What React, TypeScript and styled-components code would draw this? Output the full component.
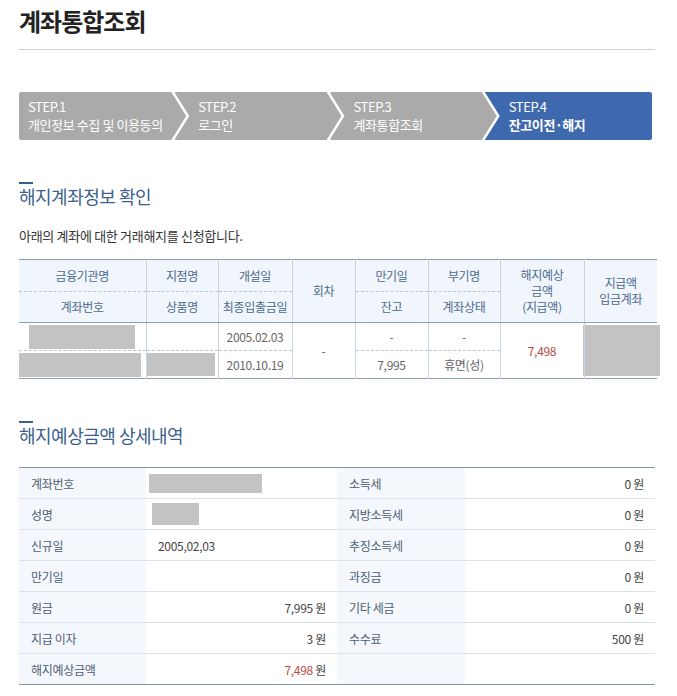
import React from 'react';
import styled, { createGlobalStyle } from 'styled-components';

const GlobalStyle = createGlobalStyle`
  html, body {
    margin: 0;
    padding: 0;
    background: #fff;
  }
  body {
    font-family: "Noto Sans CJK KR", "Noto Sans", sans-serif;
    color: #333;
  }
  * {
    box-sizing: border-box;
  }
`;

const Page = styled.div`
  width: 677px;
  padding: 0 20px 0 19px;
`;

const PageTitle = styled.h1`
  margin: 4px 0 0;
  padding-bottom: 11px;
  font-size: 24px;
  line-height: 34px;
  font-weight: 700;
  color: #222;
  letter-spacing: -1px;
  border-bottom: 1px solid #cfcfcf;
  width: 636px;
`;

const Steps = styled.ol`
  display: flex;
  list-style: none;
  margin: 42px 0 0;
  padding: 0;
  width: 633px;
  height: 48px;
`;

const Step = styled.li<{ $first?: boolean; $last?: boolean; $active?: boolean }>`
  flex: 0 0 calc((100% + 36px) / 4);
  display: flex;
  flex-direction: column;
  justify-content: center;
  margin-left: ${({ $first }) => ($first ? '0' : '-12px')};
  padding-left: ${({ $first }) => ($first ? '9px' : '24px')};
  background: ${({ $active }) => ($active ? '#3f69ae' : '#aaaaaa')};
  color: #fff;
  font-size: 13px;
  line-height: 18px;
  letter-spacing: -0.4px;
  white-space: nowrap;
  clip-path: ${({ $first, $last }) =>
    $last
      ? 'polygon(0 0, 100% 0, 100% 100%, 0 100%, 15px 50%)'
      : $first
        ? 'polygon(0 0, calc(100% - 15px) 0, 100% 50%, calc(100% - 15px) 100%, 0 100%)'
        : 'polygon(0 0, calc(100% - 15px) 0, 100% 50%, calc(100% - 15px) 100%, 0 100%, 15px 50%)'};
  border-radius: ${({ $last }) => ($last ? '0 2px 2px 0' : '2px 0 0 2px')};

  strong {
    font-weight: ${({ $active }) => ($active ? 700 : 400)};
  }
`;

const SectionTitle = styled.h2<{ $top: number }>`
  margin: ${({ $top }) => $top}px 0 0;
  padding-top: 3px;
  font-size: 18px;
  line-height: 22px;
  font-weight: 400;
  color: #3b5f8e;
  letter-spacing: -0.5px;
  position: relative;

  &::before {
    content: '';
    position: absolute;
    left: 0;
    top: 0;
    width: 14px;
    height: 2px;
    background: #3b5f8e;
  }
`;

const Desc = styled.p`
  margin: 19px 0 0;
  font-size: 13px;
  line-height: 20px;
  color: #333;
  letter-spacing: -0.3px;
`;

const AccountTable = styled.table`
  margin-top: 13px;
  width: 638px;
  border-collapse: collapse;
  table-layout: fixed;
  border-top: 1px solid #8ba0b6;
  border-bottom: 1px solid #8ba0b6;
  font-size: 12px;
  letter-spacing: -0.3px;
`;

const Th = styled.th<{ $dashed?: boolean; $h: number }>`
  height: ${({ $h }) => $h}px;
  padding: 0;
  background: #f1f6fc;
  color: #4c6a8e;
  font-weight: 400;
  line-height: 16px;
  text-align: center;
  border-left: 1px solid #c8d5e3;
  border-bottom: ${({ $dashed }) => ($dashed ? '1px dashed #b9c6d4' : '1px solid #8ba0b6')};

  &:first-child {
    border-left: none;
  }
`;

const Td = styled.td<{ $dashed?: boolean; $red?: boolean; $first?: boolean }>`
  height: 28px;
  padding: 0;
  text-align: center;
  color: ${({ $red }) => ($red ? '#b94a43' : '#666')};
  border-left: ${({ $first }) => ($first ? 'none' : '1px solid #c8d5e3')};
  border-bottom: ${({ $dashed }) => ($dashed ? '1px dashed #b9c6d4' : 'none')};
  vertical-align: middle;
`;

const Redact = styled.div<{ $w: number; $h: number; $ml?: number }>`
  width: ${({ $w }) => $w}px;
  height: ${({ $h }) => $h}px;
  margin-left: ${({ $ml }) => $ml ?? 0}px;
  background: #c3c3c3;
`;

const DetailGrid = styled.div`
  margin-top: 21px;
  width: 636px;
  display: grid;
  grid-template-columns: 127px 191px 128px 190px;
  border-top: 1px solid #8297ad;
  border-bottom: 1px solid #8297ad;
  font-size: 12px;
  letter-spacing: -0.3px;
`;

const Label = styled.div`
  height: 31px;
  display: flex;
  align-items: center;
  padding-left: 12px;
  background: #f4f8fc;
  color: #4e5e73;
  border-bottom: 1px solid #dbe2ea;
  &:nth-last-child(-n + 4) {
    border-bottom: none;
    height: 30px;
  }
`;

const Value = styled.div<{ $right?: boolean }>`
  height: 31px;
  display: flex;
  align-items: center;
  justify-content: ${({ $right }) => ($right ? 'flex-end' : 'flex-start')};
  padding: ${({ $right }) => ($right ? '0 11px 0 0' : '0 0 0 12px')};
  color: #444;
  border-bottom: 1px solid #dbe2ea;
  &:nth-last-child(-n + 4) {
    border-bottom: none;
    height: 30px;
  }
  em {
    font-style: normal;
    color: #b94a43;
  }
`;

const steps = [
  { no: 'STEP.1', name: '개인정보 수집 및 이용동의' },
  { no: 'STEP.2', name: '로그인' },
  { no: 'STEP.3', name: '계좌통합조회' },
  { no: 'STEP.4', name: '잔고이전·해지' },
];

const details: [string, React.ReactNode, boolean, string, string][] = [
  ['계좌번호', <Redact $w={113} $h={19} $ml={-9} />, false, '소득세', '0 원'],
  ['성명', <Redact $w={47} $h={22} $ml={-6} />, false, '지방소득세', '0 원'],
  ['신규일', '2005,02,03', false, '추징소득세', '0 원'],
  ['만기일', '', false, '과징금', '0 원'],
  ['원금', '7,995 원', true, '기타 세금', '0 원'],
  ['지급 이자', '3 원', true, '수수료', '500 원'],
  ['해지예상금액', <><em>7,498</em>&nbsp;원</>, true, '', ''],
];

export default function App() {
  return (
    <Page>
      <GlobalStyle />
      <PageTitle>계좌통합조회</PageTitle>

      <Steps>
        {steps.map((s, i) => (
          <Step key={s.no} $first={i === 0} $last={i === 3} $active={i === 3}>
            <span>{s.no}</span>
            <strong>{s.name}</strong>
          </Step>
        ))}
      </Steps>

      <SectionTitle $top={42}>해지계좌정보 확인</SectionTitle>
      <Desc>아래의 계좌에 대한 거래해지를 신청합니다.</Desc>

      <AccountTable>
        <colgroup>
          <col style={{ width: 127 }} />
          <col style={{ width: 72 }} />
          <col style={{ width: 74 }} />
          <col style={{ width: 63 }} />
          <col style={{ width: 73 }} />
          <col style={{ width: 72 }} />
          <col style={{ width: 84 }} />
          <col style={{ width: 73 }} />
        </colgroup>
        <thead>
          <tr>
            <Th $h={32} $dashed>금융기관명</Th>
            <Th $h={32} $dashed>지점명</Th>
            <Th $h={32} $dashed>개설일</Th>
            <Th $h={63} rowSpan={2}>회차</Th>
            <Th $h={32} $dashed>만기일</Th>
            <Th $h={32} $dashed>부기명</Th>
            <Th $h={63} rowSpan={2}>해지예상<br />금액<br />(지급액)</Th>
            <Th $h={63} rowSpan={2}>지급액<br />입금계좌</Th>
          </tr>
          <tr>
            <Th $h={31}>계좌번호</Th>
            <Th $h={31}>상품명</Th>
            <Th $h={31}>최종입출금일</Th>
            <Th $h={31}>잔고</Th>
            <Th $h={31}>계좌상태</Th>
          </tr>
        </thead>
        <tbody>
          <tr>
            <Td $first $dashed>
              <Redact $w={106} $h={24} $ml={10} />
            </Td>
            <Td $dashed />
            <Td $dashed>2005.02.03</Td>
            <Td rowSpan={2}>-</Td>
            <Td $dashed>-</Td>
            <Td $dashed>-</Td>
            <Td rowSpan={2} $red>7,498</Td>
            <Td rowSpan={2}>
              <Redact $w={77} $h={51} $ml={-2} />
            </Td>
          </tr>
          <tr>
            <Td $first>
              <Redact $w={122} $h={24} />
            </Td>
            <Td>
              <Redact $w={68} $h={23} />
            </Td>
            <Td>2010.10.19</Td>
            <Td>7,995</Td>
            <Td>휴면(성)</Td>
          </tr>
        </tbody>
      </AccountTable>

      <SectionTitle $top={42}>해지예상금액 상세내역</SectionTitle>

      <DetailGrid>
        {details.map(([l1, v1, right, l2, v2]) => (
          <React.Fragment key={l1}>
            <Label>{l1}</Label>
            <Value $right={right}>{v1}</Value>
            <Label>{l2}</Label>
            <Value $right>{v2}</Value>
          </React.Fragment>
        ))}
      </DetailGrid>
    </Page>
  );
}
